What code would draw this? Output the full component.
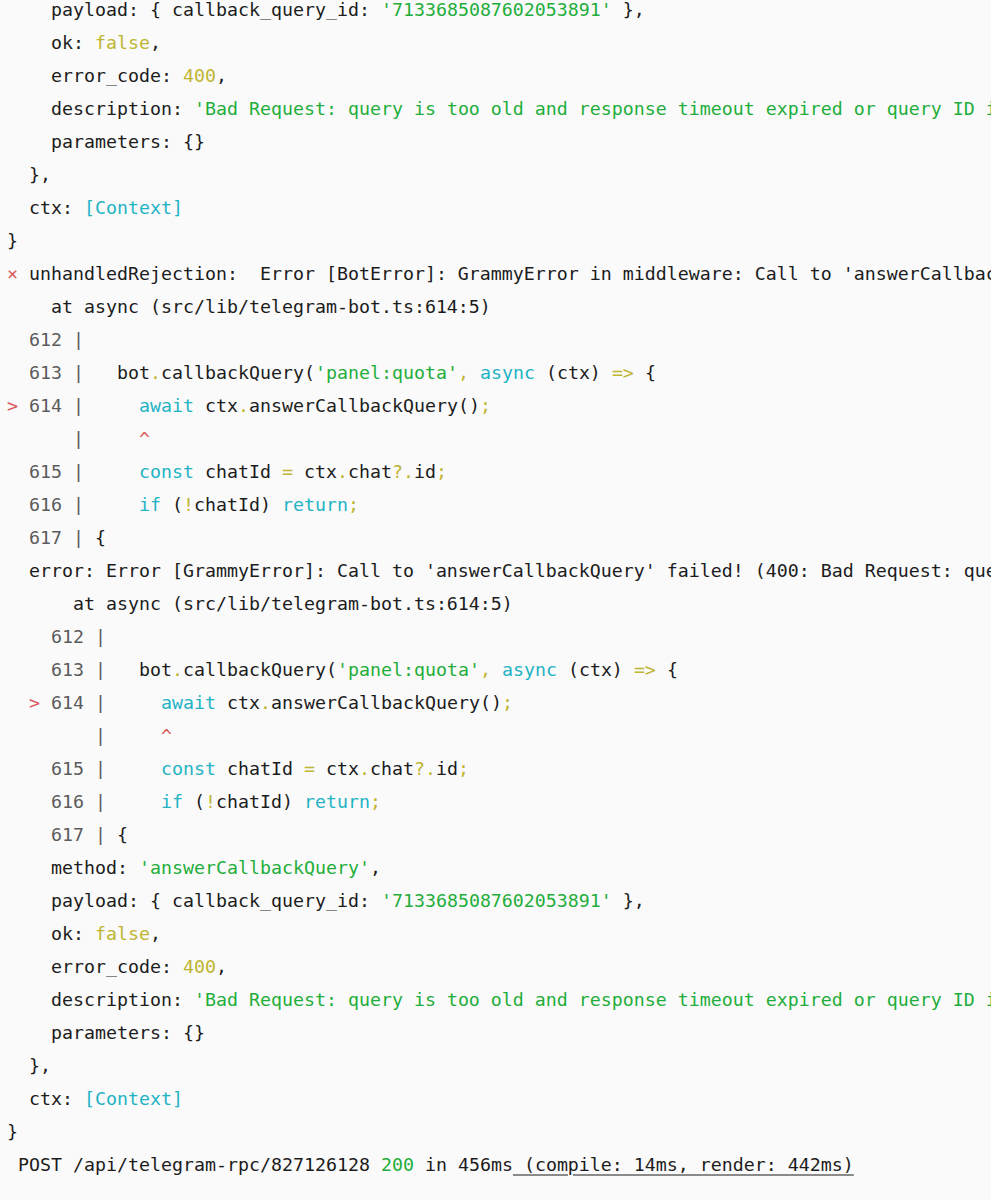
const G = ({ children }: { children: React.ReactNode }) => (
  <span className="text-[#1fae3b]">{children}</span>
);
const Y = ({ children }: { children: React.ReactNode }) => (
  <span className="text-[#bfb532]">{children}</span>
);
const C = ({ children }: { children: React.ReactNode }) => (
  <span className="text-[#1fb3c4]">{children}</span>
);
const R = ({ children }: { children: React.ReactNode }) => (
  <span className="text-[#d9595c]">{children}</span>
);
const N = ({ children }: { children: React.ReactNode }) => (
  <span className="text-[#5c5c5c]">{children}</span>
);

const Line = ({ children }: { children?: React.ReactNode }) => (
  <div className="h-[33px] whitespace-pre">{children}</div>
);

// the code frame printed by next for a failed callback query
const Frame = ({ pad }: { pad: string }) => (
  <>
    <Line>
      {pad}  <N>612 |</N>
    </Line>
    <Line>
      {pad}  <N>613 |</N>   bot<Y>.</Y>callbackQuery(<G>'panel:quota'</G>
      <Y>,</Y> <C>async</C> (ctx) <Y>{"=>"}</Y> {"{"}
    </Line>
    <Line>
      {pad}
      <R>&gt;</R> <N>614 |</N>     <C>await</C> ctx<Y>.</Y>answerCallbackQuery()<Y>;</Y>
    </Line>
    <Line>
      {pad}      <N>|</N>     <R>^</R>
    </Line>
    <Line>
      {pad}  <N>615 |</N>     <C>const</C> chatId <Y>=</Y> ctx<Y>.</Y>chat<Y>?.</Y>id<Y>;</Y>
    </Line>
    <Line>
      {pad}  <N>616 |</N>     <C>if</C> (<Y>!</Y>chatId) <C>return</C>
      <Y>;</Y>
    </Line>
    <Line>
      {pad}  <N>617 |</N> {"{"}
    </Line>
  </>
);

const Payload = () => (
  <>
    <Line>
      {"    payload: { callback_query_id: "}
      <G>'7133685087602053891'</G>
      {" },"}
    </Line>
    <Line>
      {"    ok: "}
      <Y>false</Y>,
    </Line>
    <Line>
      {"    error_code: "}
      <Y>400</Y>,
    </Line>
    <Line>
      {"    description: "}
      <G>
        'Bad Request: query is too old and response timeout expired or query ID is invalid'
      </G>
      ,
    </Line>
    <Line>{"    parameters: {}"}</Line>
    <Line>{"  },"}</Line>
    <Line>
      {"  ctx: "}
      <C>[Context]</C>
    </Line>
    <Line>{"}"}</Line>
  </>
);

export default function App() {
  return (
    <div className="w-[991px] h-[1200px] overflow-hidden bg-[#fafafa] text-[#1c1c1c] font-['DejaVu_Sans_Mono',monospace] text-[18.27px] leading-[33px]">
      <div className="-mt-[7px] pl-[7px]">
        <Payload />
        <Line>
          <R>⨯</R> unhandledRejection:  Error [BotError]: GrammyError in middleware: Call to
          'answerCallbackQuery' failed! (400: Bad Request: query is too old and response
          timeout expired or query ID is invalid)
        </Line>
        <Line>{"    at async (src/lib/telegram-bot.ts:614:5)"}</Line>
        <Frame pad="" />
        <Line>
          {"  error: Error [GrammyError]: Call to 'answerCallbackQuery' failed! (400: Bad Request: query is too old and response timeout expired or query ID is invalid)"}
        </Line>
        <Line>{"      at async (src/lib/telegram-bot.ts:614:5)"}</Line>
        <Frame pad="  " />
        <Line>
          {"    method: "}
          <G>'answerCallbackQuery'</G>,
        </Line>
        <Payload />
        <Line>
          {" POST /api/telegram-rpc/827126128 "}
          <G>200</G>
          {" in 456ms"}
          <span className="underline decoration-[#8a8a8a] decoration-2 underline-offset-[3px]">
            {" (compile: 14ms, render: 442ms)"}
          </span>
        </Line>
      </div>
    </div>
  );
}
